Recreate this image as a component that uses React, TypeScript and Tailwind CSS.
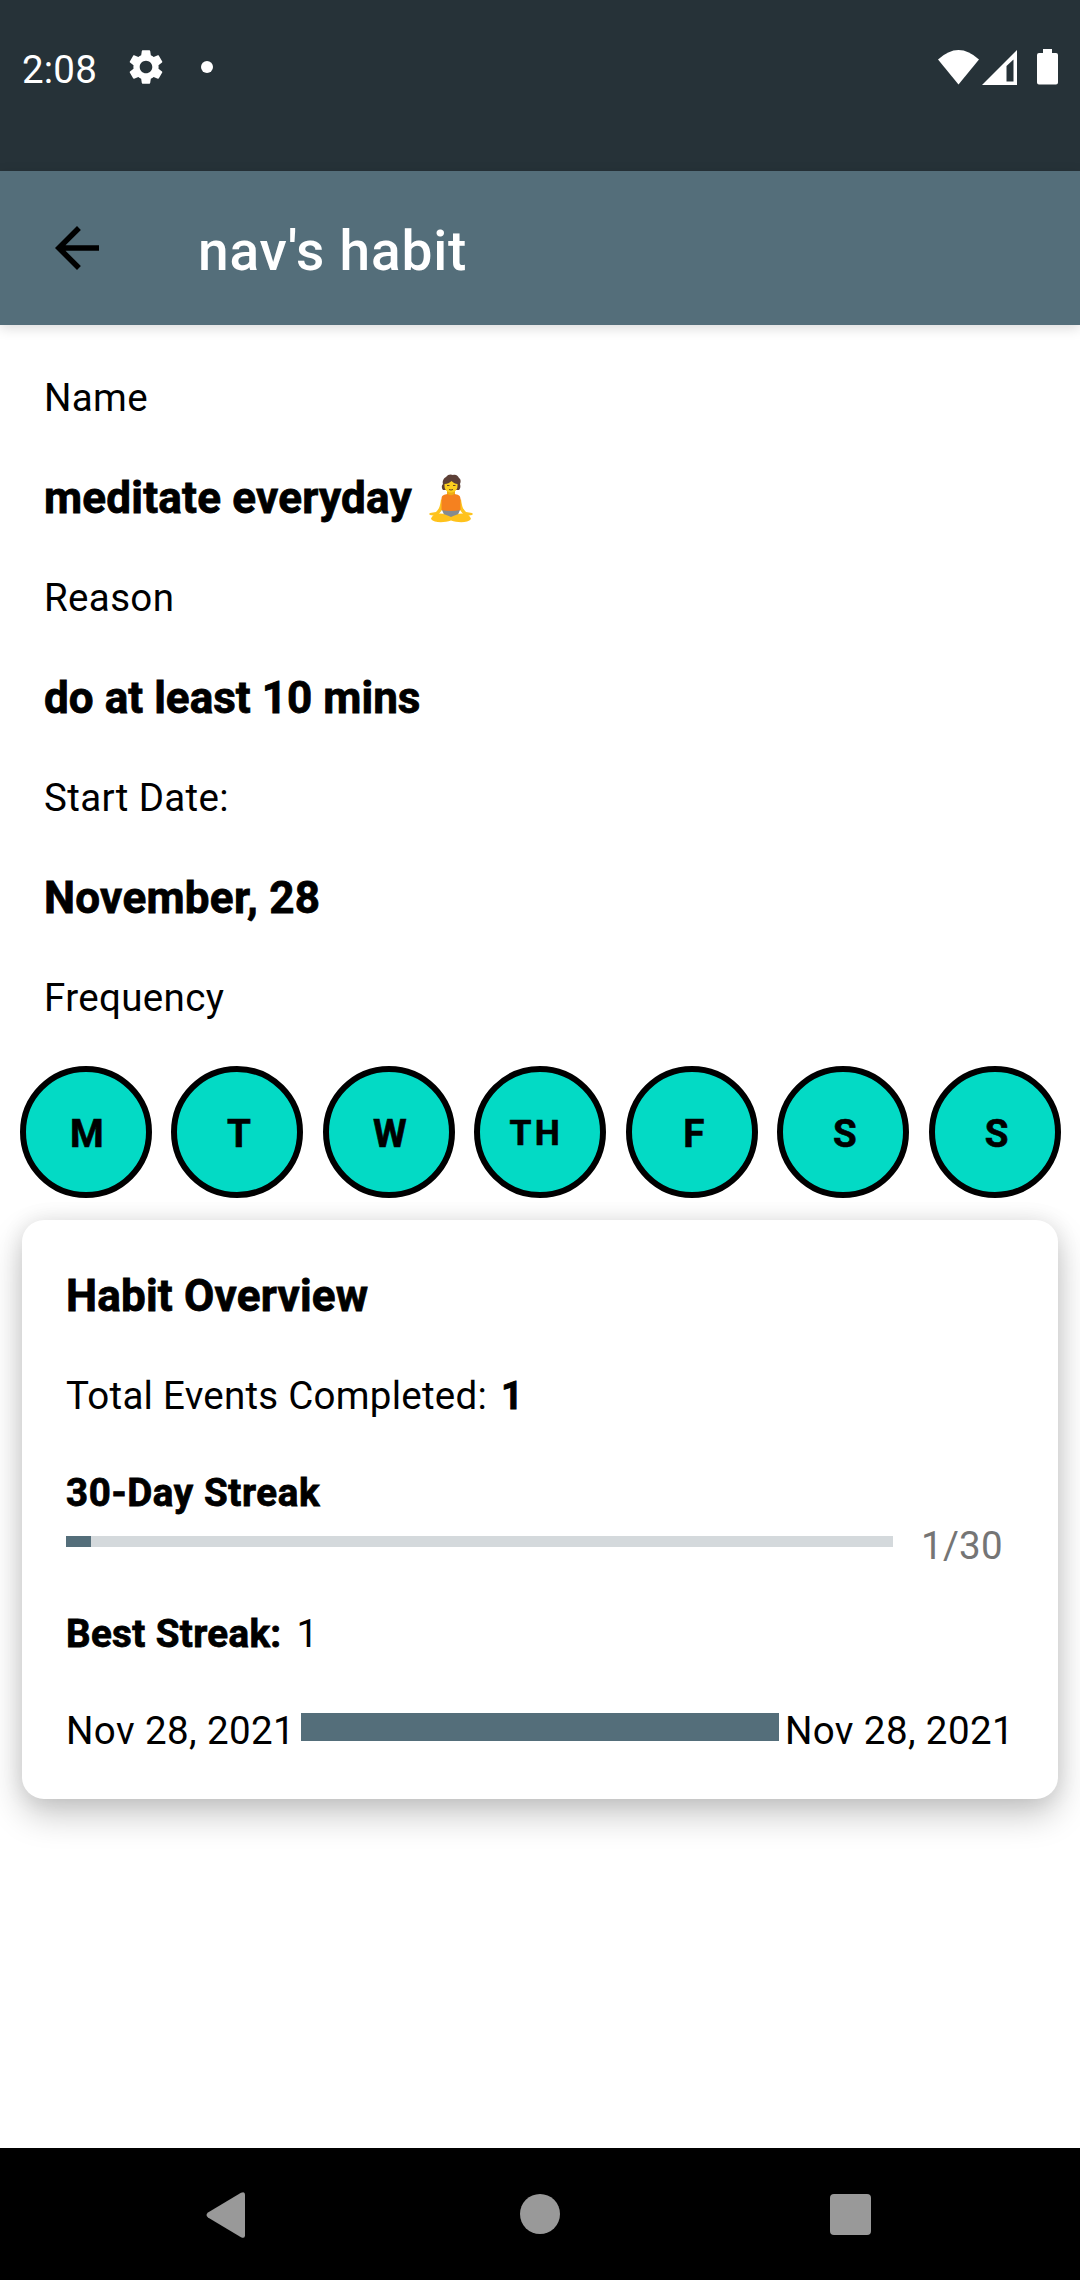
const days = [
  { label: "M", style: "text-[38.5px] pl-[2px]" },
  { label: "T", style: "text-[38.5px] pl-[3px]" },
  { label: "W", style: "text-[38.5px] pl-[2px]" },
  { label: "TH", style: "text-[35.5px] tracking-[3.4px] pr-[8px]" },
  { label: "F", style: "text-[38.5px] pl-[4px]" },
  { label: "S", style: "text-[38.5px] pl-[3px]" },
  { label: "S", style: "text-[38.5px] pl-[3px]" },
];

function Label({ children }: { children: string }) {
  return <p className="h-[100px] text-[38.5px] leading-[100px] tracking-[0.35px]">{children}</p>;
}

function Value({ children, spacing }: { children: React.ReactNode; spacing: string }) {
  return (
    <p className={"flex h-[100px] items-center text-[44px] leading-[100px] font-bold [-webkit-text-stroke:0.8px_black] " + spacing}>
      {children}
    </p>
  );
}

function LotusIcon() {
  return (
    <svg className="mt-[-1px] ml-[17px] h-[50px] w-[44px]" viewBox="0 0 44 50">
      <path d="M12 26c-1 8-2 10-5 13l-6 1q-1.500 1 0 2l6 1c5-3 8-9 9-13zM32 26c1 8 2 10 5 13l6 1q1.500 1 0 2l-6 1c-5-3-8-9-9-13z" fill="#fdc41f" />
      <path d="M13 37q9-2 18 0l-3 7H16z" fill="#858b90" />
      <path d="M2 46c1-4 5-6 9-5.500 4 0 7 2 11 3.500 4-1.500 7-3.500 11-3.500 4-.5 8 1.500 9 5.500-3 4-13 4-20 1.500C15 50 5 50 2 46z" fill="#ffc21c" />
      <path d="M18 17h8v7h-8z" fill="#efad14" />
      <path d="M12.500 26c0-4 3-4.500 6-5q3.500 2.500 7 0c3 .5 6 1 6 5v11q-9.500 2-19 0z" fill="#f5811f" />
      <path d="M14 17c-2-3-1-5 0-6-1-3 1-6 3-7 2-3 5-3 7-2 3-1 5 1 6 3 2 1 2 4 1 6 1 3 0 5-1 6z" fill="#5d4037" />
      <path d="M15.500 11c3 0 5-1 7-3 2 2 4 3 6 3v2c0 4-3 6.500-6.500 6.500S15.500 17 15.500 13z" fill="#fcd01e" />
      <path d="M18 12.500h2.500M24 12.500h2.500M20 16.500q2 1 4 0" stroke="#6d4a20" fill="none" strokeWidth="1" />
    </svg>
  );
}

export default function App() {
  return (
    <div className="flex h-[2280px] w-[1080px] flex-col bg-white font-[Roboto,sans-serif] text-black antialiased">
      <div className="flex h-[171px] items-start bg-[#263238] pt-[47px] pr-[22px] pl-[22px] text-white">
        <span className="w-[103px] text-[38.5px] leading-[45px] tracking-[0.2px]">2:08</span>
        <svg className="mt-[-1px] h-[42px] w-[42px]" viewBox="0 0 24 24" fill="currentColor">
          <path d="M19.14 12.94c.04-.3.06-.61.06-.94 0-.32-.02-.64-.07-.94l2.03-1.58c.18-.14.23-.41.12-.61l-1.92-3.32c-.12-.22-.37-.29-.59-.22l-2.39.96c-.5-.38-1.03-.7-1.62-.94l-.36-2.54c-.04-.24-.24-.41-.48-.41h-3.84c-.24 0-.43.17-.47.41l-.36 2.54c-.59.24-1.13.57-1.62.94l-2.39-.96c-.22-.08-.47 0-.59.22L2.74 8.87c-.12.21-.08.47.12.61l2.03 1.58c-.05.3-.09.63-.09.94s.02.64.07.94l-2.03 1.58c-.18.14-.23.41-.12.61l1.92 3.32c.12.22.37.29.59.22l2.39-.96c.5.38 1.03.7 1.62.94l.36 2.54c.05.24.24.41.48.41h3.84c.24 0 .44-.17.47-.41l.36-2.54c.59-.24 1.13-.56 1.62-.94l2.39.96c.22.08.47 0 .59-.22l1.92-3.32c.12-.22.07-.47-.12-.61l-2.01-1.58zM12 15.6c-1.98 0-3.6-1.62-3.6-3.6s1.62-3.6 3.6-3.6 3.6 1.62 3.6 3.6-1.62 3.6-3.6 3.6z" />
        </svg>
        <span className="mt-[14px] ml-[34px] size-[12px] rounded-full bg-white" />
        <svg className="mt-[3px] ml-auto h-[35px] w-[41px]" viewBox="0 0 41 35" fill="currentColor">
          <path d="M0 9.500Q20.500-9.500 41 9.500L20.500 34.500z" />
        </svg>
        <svg className="mt-[3px] ml-[3px] h-[35px] w-[35px]" viewBox="0 0 35 35">
          <path d="M35 0v35H0zM31.500 9.500L24.500 16v15.500h7z" fill="currentColor" fillRule="evenodd" />
        </svg>
        <svg className="mt-[2px] ml-[20px] h-[36px] w-[21px]" viewBox="0 0 21 36" fill="currentColor">
          <path d="M6 0h9v4h4q2 0 2 2v27.500q0 2-2 2H2q-2 0-2-2V6q0-2 2-2h4z" />
        </svg>
      </div>

      <header className="z-10 flex h-[154px] items-center bg-[#546e7a] pl-[44px] shadow-[0_3px_12px_rgba(0,0,0,0.15)]">
        <svg className="h-[66px] w-[66px]" viewBox="0 0 24 24">
          <path d="M20 11H7.830l5.590-5.590L12 4l-8 8 8 8 1.410-1.410L7.830 13H20z" />
        </svg>
        <h1 className="ml-[88px] pt-[6px] text-[55px] font-medium tracking-[0.85px] text-white">nav's habit</h1>
      </header>

      <main className="flex-1">
        <section className="pt-[23px] pl-[44px]">
          <Label>Name</Label>
          <Value spacing="tracking-[0.22px]">
            meditate everyday
            <LotusIcon />
          </Value>
          <Label>Reason</Label>
          <Value spacing="tracking-[0.04px]">do at least 10 mins</Value>
          <Label>Start Date:</Label>
          <Value spacing="tracking-[0.28px]">November, 28</Value>
          <Label>Frequency</Label>
        </section>

        <div className="mt-[18px] flex justify-between pr-[19px] pl-[19.8px]">
          {days.map((day, i) => (
            <div key={i} className="flex size-[132px] items-center justify-center rounded-full border-6 border-black bg-[#03dac5]">
              <span className={"pt-[4px] font-bold [-webkit-text-stroke:0.6px_black] " + day.style}>{day.label}</span>
            </div>
          ))}
        </div>

        <section className="mx-[22px] mt-[22px] h-[579px] rounded-[22px] bg-white px-[44px] pt-[50px] text-[38.5px] leading-[45px] shadow-[0_16px_34px_rgba(0,0,0,0.22),0_0_22px_rgba(0,0,0,0.09)]">
          <h2 className="text-[44px] leading-[52px] font-bold tracking-[0.2px] [-webkit-text-stroke:0.8px_black]">Habit Overview</h2>
          <p className="mt-[51px] flex gap-[14px]">
            <span className="tracking-[0.25px]">Total Events Completed:</span>
            <b className="[-webkit-text-stroke:0.8px_black]">1</b>
          </p>
          <p className="mt-[52px] font-bold tracking-[0.62px] [-webkit-text-stroke:0.8px_black]">30-Day Streak</p>
          <div className="mt-[8px] flex items-start">
            <div className="mt-[13px] h-[11px] w-[827px] bg-[#d4d9dc]">
              <div className="h-full w-[25px] bg-[#546e7a]" />
            </div>
            <span className="ml-[28px] tracking-[0.3px] text-[#757575]">1/30</span>
          </div>
          <p className="mt-[43px] flex gap-[15px]">
            <b className="tracking-[0.38px] [-webkit-text-stroke:0.8px_black]">Best Streak:</b>
            <span>1</span>
          </p>
          <div className="mt-[52px] flex items-start">
            <span className="w-[235px] tracking-[0.4px] whitespace-nowrap">Nov 28, 2021</span>
            <div className="mt-[5px] h-[28px] w-[478px] bg-[#546e7a]" />
            <span className="ml-[6px] tracking-[0.4px] whitespace-nowrap">Nov 28, 2021</span>
          </div>
        </section>
      </main>

      <nav className="flex h-[132px] items-start bg-black pt-[44px] pl-[206px] text-[#999999]">
        <svg className="h-[46px] w-[40px]" viewBox="0 0 40 46" fill="currentColor">
          <path d="M2 20.500L35 .800q4-2 4 2v40.400q0 4-4 2L2 25.500q-3-2.500 0-5z" />
        </svg>
        <div className="mt-[2px] ml-[274px] size-[40px] rounded-full bg-[#999999]" />
        <div className="mt-[2px] ml-[270px] size-[41px] rounded-[4px] bg-[#999999]" />
      </nav>
    </div>
  );
}
